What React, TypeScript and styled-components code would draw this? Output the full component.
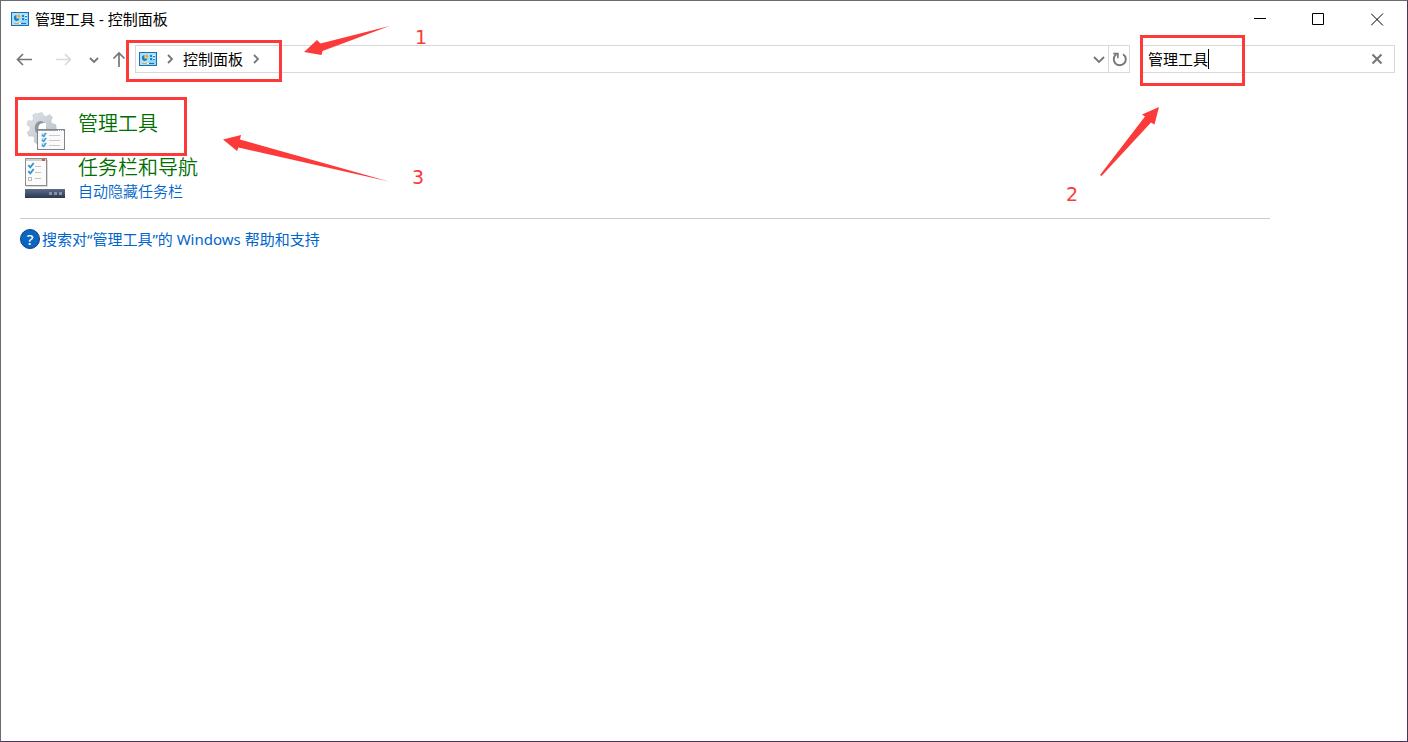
import React, { useState } from "react";
import styled, { createGlobalStyle } from "styled-components";

const RED = "#fc3a3a";

const GlobalStyle = createGlobalStyle`
  * { box-sizing: border-box; }
  body {
    margin: 0;
    background: #fff;
    color: #000;
    font-family: "Noto Sans", "Noto Sans CJK SC", sans-serif;
    font-size: 15px;
    line-height: 20px;
  }
  button, input { font: inherit; color: inherit; }
`;

const Window = styled.div`
  position: relative;
  min-height: 100vh;
  border: 1px solid #6b6b6e;
  border-right-color: #50305f;
  border-bottom-color: #50305f;
  background: #fff;
`;

const TitleBar = styled.header`
  display: flex;
  align-items: center;
  height: 36px;
  padding-left: 10px;
`;

const Title = styled.h1`
  flex: 1;
  margin: 0 0 0 6px;
  font-size: 15px;
  font-weight: 400;
`;

const IconButton = styled.button<{ $width: number }>`
  display: flex;
  flex: none;
  align-items: center;
  justify-content: center;
  width: ${(p) => p.$width}px;
  height: 100%;
  padding: 0;
  border: 0;
  background: none;
  color: #767676;

  &:disabled { color: #d9d9d9; }
`;

const CaptionButton = styled(IconButton)`
  color: #000;
`;

const NavBar = styled.nav`
  display: flex;
  align-items: center;
  gap: 12px;
  height: 44px;
  padding: 0 12px 0 4px;
`;

const NavGroup = styled.div`
  display: flex;
  flex: 1;
  align-items: center;
`;

const Address = styled.div`
  display: flex;
  flex: 1;
  height: 28px;
  margin-left: 3px;
  border: 1px solid #d9d9d9;
`;

const Crumbs = styled.div`
  display: flex;
  flex: 1;
  align-items: center;
  gap: 7px;
  padding-left: 3px;
  color: #767676;
`;

const CrumbLink = styled.a`
  color: #000;
  text-decoration: none;
`;

const RefreshCell = styled.div`
  border-left: 1px solid #d9d9d9;
`;

const SearchBox = styled.label`
  display: flex;
  align-items: center;
  width: 253px;
  height: 28px;
  padding-left: 5px;
  border: 1px solid #d9d9d9;
`;

const SearchInput = styled.input`
  width: 60px;
  field-sizing: content;
  padding: 0;
  border: 0;
  outline: 0;
  background: none;
  caret-color: transparent;
`;

const Caret = styled.span`
  width: 1px;
  height: 20px;
  margin-right: auto;
  background: #000;
`;

const Content = styled.main`
  max-width: 1269px;
  padding: 30px 0 0 19px;
`;

const Results = styled.ul`
  margin: 0;
  padding: 0 0 17px 4px;
  border-bottom: 1px solid #cbcbcb;
  list-style: none;
`;

const Result = styled.li`
  display: flex;
  gap: 12px;
  min-height: 44px;
`;

const ResultTitle = styled.h2`
  margin: 0;
  font-size: 20px;
  font-weight: 350;
  line-height: 26px;
`;

const ResultLink = styled.a`
  color: #006f00;
  text-decoration: none;
`;

const TaskLink = styled.a`
  display: block;
  color: #0066cc;
  font-weight: 350;
  line-height: 20px;
  text-decoration: none;
`;

const HelpLink = styled.a`
  display: inline-flex;
  align-items: center;
  gap: 2px;
  margin-top: 10px;
  color: #0066cc;
  text-decoration: none;
`;

/* Red marks drawn over the window */
type Place = { $left?: number; $right?: number; $top: number };

const Mark = styled.div<Place>`
  position: absolute;
  top: ${(p) => p.$top}px;
  ${(p) => (p.$left !== undefined ? `left: ${p.$left}px;` : "")}
  ${(p) => (p.$right !== undefined ? `right: ${p.$right}px;` : "")}
  pointer-events: none;
`;

const Frame = styled(Mark)<{ $width: number; $height: number }>`
  width: ${(p) => p.$width}px;
  height: ${(p) => p.$height}px;
  border: 3px solid ${RED};
`;

const Step = styled(Mark)`
  color: ${RED};
  font-family: "DejaVu Sans", sans-serif;
  font-size: 19px;
  line-height: 24px;
`;

const Arrow = ({ w, h, points }: { w: number; h: number; points: string }) => (
  <svg width={w} height={h} viewBox={`0 0 ${w} ${h}`} display="block" aria-hidden="true">
    <polygon points={points} fill={RED} />
  </svg>
);

const PanelIcon = () => (
  <svg width="18" height="14" viewBox="0 0 18 14" aria-hidden="true">
    <rect width="18" height="14" fill="#1c6fa8" />
    <rect x="1" y="1" width="16" height="12" fill="#8fd6fb" />
    <path d="M1 1h16L7 13H1z" fill="#a9e1fd" />
    <circle cx="6" cy="6" r="3.2" fill="#d9f1fd" />
    <path d="M5.5 3a3 3 0 1 0 3.3 3.5H5.5z" fill="#1b7fc4" />
    <path d="M6.3 2.4v3.4h3.3a3.3 3.3 0 0 0-3.3-3.4z" fill="#f2a93b" />
    <path d="M11 3h2v2h-2zM11 6h2v2h-2z" fill="#1b7fc4" />
    <path d="M14 3h2v2h-2zM14 6h2v2h-2z" fill="#fff" />
    <path d="M14 4.5h2M14 7.5h2" stroke="#1b7fc4" />
    <path d="M3 11.5h5" stroke="#f2a020" />
    <path d="M8 11.5h2" stroke="#fff" />
    <path d="M10 11.5h5" stroke="#1b6fb0" />
  </svg>
);

const ArrowIcon = ({ d }: { d: string }) => (
  <svg width="16" height="16" viewBox="0 0 16 16" fill="none" stroke="currentColor" strokeWidth="1.7" aria-hidden="true">
    <path d={d} />
  </svg>
);

const Chevron = ({ d, w = 1.8 }: { d: string; w?: number }) => (
  <svg width="12" height="12" viewBox="0 0 12 12" fill="none" stroke="currentColor" strokeWidth={w} aria-hidden="true">
    <path d={d} />
  </svg>
);

const CaptionIcon = ({ d }: { d: string }) => (
  <svg width="13" height="13" viewBox="0 0 13 13" fill="none" stroke="currentColor" aria-hidden="true">
    <path d={d} />
  </svg>
);

const RefreshIcon = () => (
  <svg width="16" height="16" viewBox="0 0 16 16" fill="none" stroke="currentColor" strokeWidth="1.9" aria-hidden="true">
    <path d="M12 3.2a6 6 0 1 1-6.6.1" />
    <path d="M2.3 2.6h4.6v4.7" strokeWidth="1.6" />
  </svg>
);

const ToolsIcon = () => (
  <svg width="42" height="44" viewBox="0 0 42 44" aria-hidden="true">
    <defs>
      <linearGradient id="gear" x1="0" y1="0" x2="1" y2="1">
        <stop offset="0" stopColor="#dfe4e8" />
        <stop offset="1" stopColor="#b6bec5" />
      </linearGradient>
    </defs>
    <path
      fill="url(#gear)"
      stroke="#c3cad0"
      strokeWidth=".6"
      d="M14 2.5l4-1 2 3.4 2.2.6 3.6-2 2.6 3-1.5 3.7 1.2 2.4 3.8 1 .4 4.4-2 1.5V33H13l-3-2.2.6-3.8-1.8-2-4 .2-1.6-4 3-2.4-.2-2.8-3-2.2 1-4 4 .2 1.6-2-.8-4 3-1.8 3 2z"
    />
    <ellipse cx="16.5" cy="17" rx="5.8" ry="7" fill="#8e979e" />
    <path d="M14.5 19c-1-5 2.5-8 7.5-6.5V19z" fill="#fff" />
    <rect x="13.5" y="18.5" width="27" height="20" fill="#fafafa" stroke="#7f8488" />
    <path d="M14 19.5h26" stroke="#9a9fa3" />
    <path d="M34 19.5h1M36 19.5h1M38 19.5h1" stroke="#fff" />
    <path d="M25 24.5h11M25 29.5h11M25 34.5h11" stroke="#c9c9c9" />
    <path d="M18 22.5h3v3h-3zM18 27.5h3v3h-3zM18 32.5h3v3h-3z" fill="#d5ecfa" stroke="#a4cbe5" strokeWidth=".6" />
    <path d="M18 23.7l1.6 1.7 2.6-3.6M18 28.7l1.6 1.7 2.6-3.6M18 33.7l1.6 1.7 2.6-3.6" fill="none" stroke="#3d9bd8" strokeWidth="1.4" />
  </svg>
);

const TaskbarIcon = () => (
  <svg width="42" height="44" viewBox="0 -1 42 44" aria-hidden="true">
    <defs>
      <linearGradient id="bar" x1="0" y1="0" x2="0" y2="1">
        <stop offset="0" stopColor="#5b6d8a" />
        <stop offset="1" stopColor="#2b3850" />
      </linearGradient>
    </defs>
    <path d="M23.5 4v26.5H2" fill="none" stroke="#d9d9d9" />
    <rect x="1.5" y="2.5" width="21" height="27" fill="#fbfbfb" stroke="#8d8d8d" />
    <path d="M2 4h20" stroke="#cfcfcf" strokeWidth="2" />
    <path d="M18 4h3" stroke="#d9534f" strokeWidth="2" />
    <path d="M11 10.5h6M11 16.5h6M11 22.5h6" stroke="#c4c4c4" />
    <path d="M4.3 9.2l2 2.2 3.4-4.4M4.3 15.2l2 2.2 3.4-4.4" fill="none" stroke="#2f95cc" strokeWidth="1.8" />
    <rect x="4.5" y="21.5" width="3" height="3" fill="none" stroke="#bdbdbd" />
    <rect x="1" y="33" width="40" height="9" fill="url(#bar)" />
    <path d="M25 36h3v3h-3zM30 36h3v3h-3zM35 36h3v3h-3z" fill="#8493a9" />
  </svg>
);

const HelpBadge = styled.span`
  display: flex;
  align-items: center;
  justify-content: center;
  width: 20px;
  height: 20px;
  border: 1px solid #08437f;
  border-radius: 50%;
  background: #0a66c2;
  color: #fff;
  font-weight: 500;
`;

export default function App() {
  const [query, setQuery] = useState("管理工具");

  return (
    <>
      <GlobalStyle />
      <Window>
        <TitleBar>
          <PanelIcon />
          <Title>管理工具 - 控制面板</Title>
          <CaptionButton $width={59} aria-label="最小化">
            <CaptionIcon d="M1 5.5h12" />
          </CaptionButton>
          <CaptionButton $width={59} aria-label="最大化">
            <CaptionIcon d="M.5 .5h11v11H.5z" />
          </CaptionButton>
          <CaptionButton $width={59} aria-label="关闭">
            <CaptionIcon d="M0 .5l12 12M12 .5l-12 12" />
          </CaptionButton>
        </TitleBar>

        <NavBar>
          <NavGroup>
            <IconButton $width={38} aria-label="后退">
              <ArrowIcon d="M16 8.5H1.5M7 3L1.5 8.5 7 14" />
            </IconButton>
            <IconButton $width={39} aria-label="前进" disabled>
              <ArrowIcon d="M1 8.5h14.5M10 3l5.5 5.5L10 14" />
            </IconButton>
            <IconButton $width={24} aria-label="最近浏览的位置">
              <Chevron d="M2 5l4 4 4-4" />
            </IconButton>
            <IconButton $width={26} aria-label="上移">
              <ArrowIcon d="M8 16V2M2.5 7.5L8 2l5.5 5.5" />
            </IconButton>
            <Address>
              <Crumbs>
                <PanelIcon />
                <Chevron d="M4 2l4 4-4 4" />
                <CrumbLink href="#">控制面板</CrumbLink>
                <Chevron d="M4 2l4 4-4 4" />
              </Crumbs>
              <IconButton $width={19} aria-label="以前的位置">
                <Chevron d="M1 4l5 5 5-5" />
              </IconButton>
              <RefreshCell>
                <IconButton $width={20} aria-label="刷新">
                  <RefreshIcon />
                </IconButton>
              </RefreshCell>
            </Address>
          </NavGroup>
          <SearchBox>
            <SearchInput
              type="text"
              aria-label="搜索控制面板"
              value={query}
              onChange={(e) => setQuery(e.target.value)}
            />
            <Caret />
            <IconButton $width={35} aria-label="清除" onClick={() => setQuery("")}>
              <Chevron d="M1.5 1.5l9 9M10.5 1.5l-9 9" w={2.1} />
            </IconButton>
          </SearchBox>
        </NavBar>

        <Content>
          <Results>
            <Result>
              <ToolsIcon />
              <ResultTitle>
                <ResultLink href="#">管理工具</ResultLink>
              </ResultTitle>
            </Result>
            <Result>
              <TaskbarIcon />
              <div>
                <ResultTitle>
                  <ResultLink href="#">任务栏和导航</ResultLink>
                </ResultTitle>
                <TaskLink href="#">自动隐藏任务栏</TaskLink>
              </div>
            </Result>
          </Results>
          <HelpLink href="#">
            <HelpBadge>?</HelpBadge>
            <span>搜索对“管理工具”的 Windows 帮助和支持</span>
          </HelpLink>
        </Content>

        <Frame $left={125} $top={39} $width={156} $height={42} />
        <Mark $left={303} $top={25}>
          <Arrow w={86} h={30} points="0,26 13,14 16.5,17.5 85.5,0 18.5,25 17.5,29" />
        </Mark>
        <Step $left={414} $top={24}>1</Step>

        <Frame $right={162} $top={34} $width={105} $height={51} />
        <Mark $right={247} $top={106}>
          <Arrow w={60} h={69} points="59,0 42,7.5 45,9.5 0,68 1.5,69 51,15.5 54.5,17.5" />
        </Mark>
        <Step $right={329} $top={181}>2</Step>

        <Frame $left={14} $top={96} $width={172} $height={59} />
        <Mark $left={222} $top={134}>
          <Arrow w={167} h={47} points="0,4.5 18,0 17,4.5 166,46.5 15.5,12.5 14,16" />
        </Mark>
        <Step $left={411} $top={164}>3</Step>
      </Window>
    </>
  );
}
